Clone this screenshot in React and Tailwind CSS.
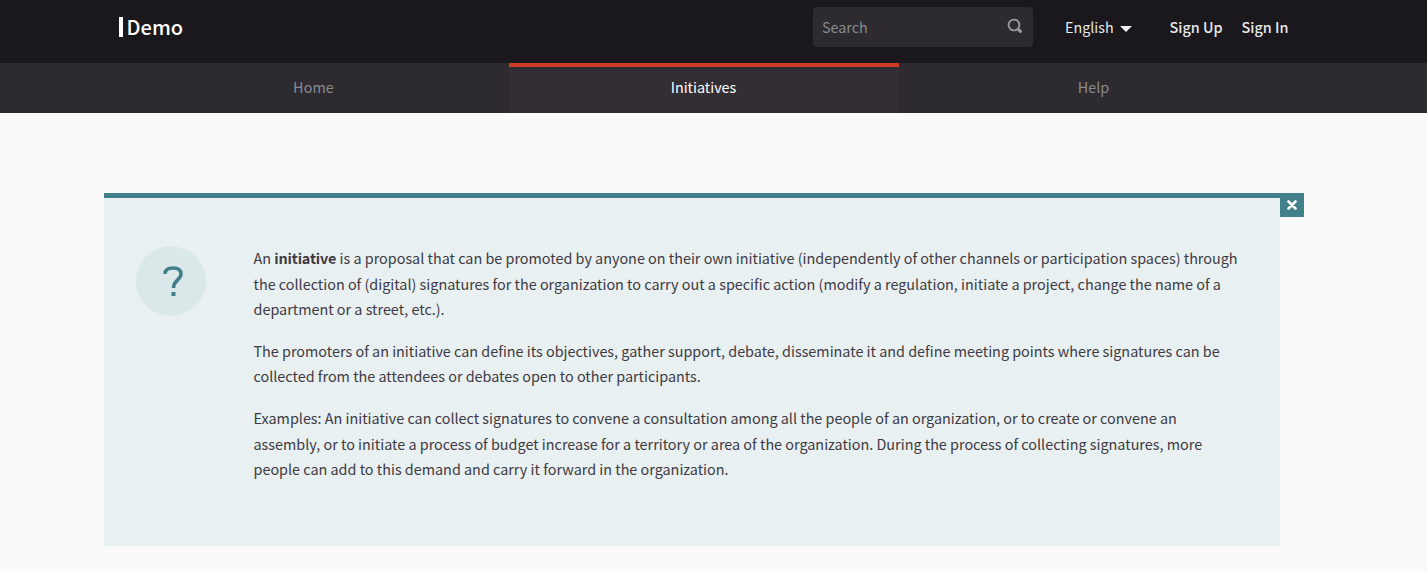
import React from "react";

function Header() {
  return (
    <header className="h-[63px] bg-[#1a181d]">
      <div className="ml-[104px] flex h-[54px] w-[1200px] items-center pl-[15px] text-[#e8e8e8]">
        <a className="flex w-[694px] items-center text-[20px] font-medium text-white">
          <span className="mr-[3.6px] block h-5 w-1 bg-white" />
          <span className="leading-5">Demo</span>
        </a>
        <div className="flex h-10 w-[220px] items-center justify-between rounded bg-[#2d2a30] pl-[9px] pr-[10px]">
          <span className="text-[14.3px] text-[#8a8a8d]">Search</span>
          <svg className="-mt-0.5 h-4 w-4" viewBox="0 0 16 16" fill="none" stroke="#9b989e" strokeLinecap="round">
            <circle cx="7" cy="7" r="5.4" strokeWidth="1.9" />
            <path d="M11.6 11.6 L13.4 13.4" strokeWidth="3.2" />
          </svg>
        </div>
        <div className="ml-8 flex w-[67px] items-center justify-between text-[14.3px]">
          <span>English</span>
          <svg className="mt-[3px] h-[6px] w-3" viewBox="0 0 12 6" fill="#f0f0f0"><path d="M0 0h12L6 6z" /></svg>
        </div>
        <a className="ml-[37.5px] w-[72px] whitespace-nowrap text-[14.4px] font-medium">Sign Up</a>
        <a className="whitespace-nowrap text-[14.4px] font-medium">Sign In</a>
      </div>
    </header>
  );
}

function Nav() {
  return (
    <nav className="h-[50px] bg-[#2d2a30] text-[14.35px]">
      <div className="ml-[119px] grid h-full w-[1170px] grid-cols-3 text-center leading-[48px] text-[#8a8a8d]">
        <a className="pr-px tracking-[0.1px]">Home</a>
        <a className="h-[50px] border-t-4 border-[#cd3b26] bg-[#322e34] pr-px leading-[40px] text-white">Initiatives</a>
        <a className="pr-px">Help</a>
      </div>
    </nav>
  );
}

function Callout() {
  return (
    <section className="relative ml-[104px] mt-[80px] flex h-[353px] w-[1176px] border-t-[5px] border-[#417f8b] bg-[#e8f0f2] pl-8 pt-12">
      <div className="flex h-[70px] w-[70px] shrink-0 items-center justify-center rounded-full bg-[#dbe8e9]">
        <svg className="ml-[3px] h-[30px] w-5" viewBox="0 0 20 30" fill="none" stroke="#417f8b" strokeWidth="3.5">
          <path d="M2 8 C2 4 5 2 10 2 C15 2 18 4 18 8 C18 14 10.5 14 10.5 22" />
          <path d="M8.5 28h4" strokeWidth="4" />
        </svg>
      </div>
      <div className="-mt-px ml-[47.5px] whitespace-nowrap text-[14.385px] leading-[25.6px] text-[#3e3a42]">
        <p className="mb-4">
          An <strong className="font-bold tracking-[-0.15px]">initiative</strong> is a proposal that can be promoted by anyone on their own initiative (independently of other channels or participation spaces) through<br />
          the collection of (digital) signatures for the organization to carry out a specific action (modify a regulation, initiate a project, change the name of a<br />
          department or a street, etc.).
        </p>
        <p className="mb-4">
          The promoters of an initiative can define its objectives, gather support, debate, disseminate it and define meeting points where signatures can be<br />
          collected from the attendees or debates open to other participants.
        </p>
        <p>
          Examples: An initiative can collect signatures to convene a consultation among all the people of an organization, or to create or convene an<br />
          assembly, or to initiate a process of budget increase for a territory or area of the organization. During the process of collecting signatures, more<br />
          people can add to this demand and carry it forward in the organization.
        </p>
      </div>
      <button className="absolute -right-6 -top-[5px] flex h-6 w-6 items-center justify-center bg-[#417f8b]">
        <svg className="h-[10px] w-[10px]" viewBox="0 0 10 10" stroke="#fff" strokeWidth="2.6" strokeLinecap="round"><path d="M1.5 1.5l7 7M8.5 1.5l-7 7" /></svg>
      </button>
    </section>
  );
}

export default function App() {
  return (
    <div className="h-[571px] overflow-hidden bg-[#fafafa] font-['Noto_Sans_CJK_SC','Noto_Sans',sans-serif]">
      <Header />
      <Nav />
      <Callout />
    </div>
  );
}
